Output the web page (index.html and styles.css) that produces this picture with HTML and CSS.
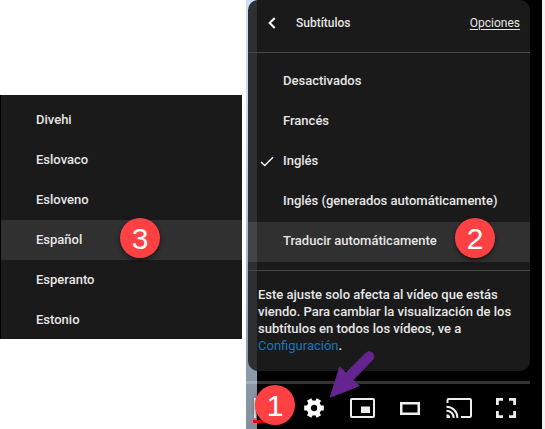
FILE: index.html
```
<!DOCTYPE html>
<html lang="es">
<head>
<meta charset="utf-8">
<title>Subtítulos</title>
<link rel="stylesheet" href="styles.css">
</head>
<body>
<main class="stage">
  <ul class="languages">
    <li>Divehi</li>
    <li>Eslovaco</li>
    <li>Esloveno</li>
    <li class="selected">Español<span class="badge badge-three">3</span></li>
    <li>Esperanto</li>
    <li>Estonio</li>
  </ul>
  <section class="player">
    <div class="menu">
      <header class="menu-header">
        <svg class="back" width="8" height="12" viewBox="0 0 8 12"><path d="M6.7 1L1.7 6L6.7 11" fill="none" stroke="#fff" stroke-width="2"/></svg>
        <span class="title">Subtítulos</span>
        <a class="options">Opciones</a>
      </header>
      <ul class="tracks">
        <li>Desactivados</li>
        <li>Francés</li>
        <li><svg class="check" width="14" height="11" viewBox="0 0 14 11"><path d="M1 6L4.7 9.6L13 1.3" fill="none" stroke="#fff" stroke-width="1.4"/></svg>Inglés</li>
        <li>Inglés (generados automáticamente)</li>
        <li class="selected">Traducir automáticamente<span class="badge badge-two">2</span></li>
      </ul>
      <p class="note">Este ajuste solo afecta al vídeo que estás<br>viendo. Para cambiar la visualización de los<br>subtítulos en todos los vídeos, ve a<br><a>Configuración</a>.</p>
    </div>
    <div class="progress"></div>
    <div class="controls">
      <span class="subtitle-button"><span class="badge badge-one">1</span></span>
      <svg width="20" height="20" viewBox="0 0 20 20"><g fill="none" stroke="#fff"><circle cx="10" cy="10" r="5.3" stroke-width="4.2"/><path d="M.2 10H4.5M15.5 10H19.8M5.1 1.5L7.3 5.3M12.7 14.7L14.9 18.5M14.9 1.5L12.7 5.3M7.3 14.7L5.1 18.5" stroke-width="5"/></g></svg>
      <svg width="25" height="20" viewBox="0 0 25 20"><rect x="1" y="1" width="23" height="18" rx="1" fill="none" stroke="#eee" stroke-width="2"/><path d="M11 8.5h9v6.5H11z" fill="#eee"/></svg>
      <svg width="20" height="13" viewBox="0 0 20 13"><path d="M1.25 1.25h17.5v10.5H1.25z" fill="none" stroke="#eee" stroke-width="2.5"/></svg>
      <svg width="26" height="20" viewBox="0 0 26 20"><g fill="none" stroke="#eee" stroke-width="2"><path d="M1.5 5V2.2Q1.5 1 2.7 1H23.8Q25 1 25 2.2V17.8Q25 19 23.8 19H15"/><path d="M.5 8.7A10.8 10.8 0 0 1 11.3 20M.5 12.7A7 7 0 0 1 7.6 20"/></g><path d="M.5 16.2A3.8 3.8 0 0 1 4.2 20H.5z" fill="#eee"/></svg>
      <svg width="20" height="20" viewBox="0 0 20 20"><path d="M1.4 7V1.4H7M13 1.4h5.6V7M18.6 13v5.6H13M7 18.6H1.4V13" fill="none" stroke="#eee" stroke-width="2.8"/></svg>
    </div>
    <svg class="arrow" width="50" height="50" viewBox="0 0 50 50"><path d="M3.5 48L13.5 16L20 22.5L39.5 3Q43-.5 46.7 2.8Q50 6.5 46.5 10.3L27.5 30L34 36Z" fill="#652490"/></svg>
  </section>
</main>
</body>
</html>
```
FILE: styles.css
```
* { box-sizing: border-box; }
body {
  margin: 0;
  background: #fff;
  color: #e6e6e6;
  font: 500 13px/17px Roboto, "Liberation Sans", sans-serif;
}
ul { margin: 0; padding: 0; list-style: none; }
.stage {
  display: flex;
  align-items: flex-start;
  gap: 4px;
  width: 545px;
  height: 429px;
  overflow: hidden;
}
.languages {
  width: 242px;
  height: 244px;
  margin-top: 95px;
  padding-top: 5px;
  background: #1a1a1a;
  border-left: 1px solid #000;
}
.languages li, .tracks li {
  position: relative;
  display: flex;
  align-items: center;
  height: 40px;
  padding-left: 35px;
}
.languages li { padding-bottom: 1px; }
.languages .selected { background: #303030; }
.player {
  position: relative;
  width: 299px;
  height: 429px;
  background:
    linear-gradient(#f1f1f1, #f1f1f1) right / 3px 100% no-repeat,
    linear-gradient(#000, #000) 11px 0 / 285px 100% no-repeat,
    linear-gradient(#cce0fa 0, #c0d2ef 35%, #94a3b9 75%, #858f9b 100%);
}
.menu {
  width: 282px;
  height: 371px;
  margin-left: 2px;
  border-radius: 10px;
  background: linear-gradient(90deg, #2d2f31 9px, #1a1a1a 9px);
}
.menu-header {
  display: flex;
  align-items: center;
  height: 53px;
  padding: 0 10px 6px 20px;
  border-bottom: 1px solid #484848;
}
.title { margin-left: 20px; font-size: 12px; }
.options {
  margin-left: auto;
  font-size: 12px;
  font-weight: 400;
  text-decoration: underline;
  text-underline-offset: 2px;
}
.tracks {
  height: 218px;
  padding-top: 9px;
  border-bottom: 1px solid #484848;
}
.tracks li { padding-bottom: 3px; }
.tracks .selected { background: linear-gradient(90deg, #424446 9px, #303030 9px); }
.check { position: absolute; left: 12px; top: 14px; }
.note { margin: 15px 0 0 10px; white-space: nowrap; }
.note a { color: #1b75bb; font-weight: 400; }
.progress {
  height: 3px;
  margin-top: 10px;
  margin-right: 15px;
  background: linear-gradient(90deg, #a5afbb 11px, #333 11px);
}
.controls {
  display: flex;
  align-items: center;
  height: 48px;
  padding-left: 8px;
}
.subtitle-button {
  position: relative;
  width: 14px;
  height: 20px;
  border-left: 2px solid #eee;
}
.subtitle-button::after {
  content: "";
  position: absolute;
  left: -3px;
  bottom: -5px;
  width: 14px;
  height: 3px;
  background: #f00;
}
.controls svg:nth-child(2) { margin-left: 36px; }
.controls svg:nth-child(3) { margin-left: 26px; }
.controls svg:nth-child(4) { margin-left: 25px; }
.controls svg:nth-child(5) { margin-left: 26px; }
.controls svg:nth-child(6) { margin-left: 24px; }
.badge {
  position: absolute;
  z-index: 1;
  width: 40px;
  height: 40px;
  border-radius: 50%;
  background: #ff4144;
  color: #fff;
  font: 400 30px/41px "Liberation Sans", sans-serif;
  text-align: center;
  box-shadow: 0 2px 4px #0008;
}
.badge-three { left: 119px; top: -2px; }
.badge-two { left: 207px; top: -4px; }
.badge-one { left: -1px; top: -13px; }
.arrow { position: absolute; left: 80px; top: 350px; }
```
